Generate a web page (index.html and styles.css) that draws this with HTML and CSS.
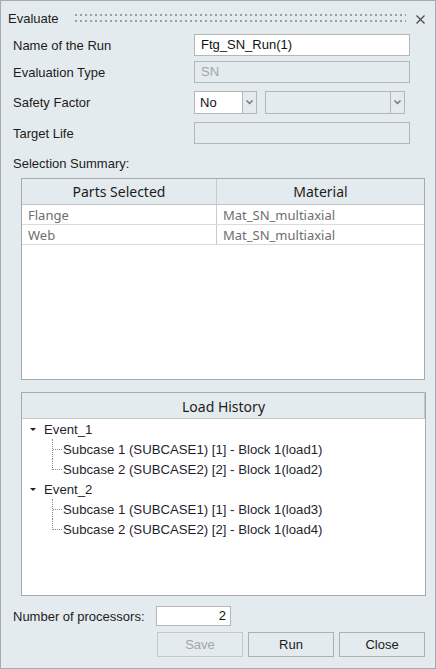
FILE: index.html
```html
<!DOCTYPE html>
<html>
<head>
<meta charset="utf-8">
<link rel="stylesheet" href="styles.css">
</head>
<body>
<div class="window">
  <div class="titlebar">
    <span class="title">Evaluate</span>
    <span class="grip"></span>
    <svg class="close" width="9" height="9" viewBox="0 0 9 9"><path d="M0.5 0.5 L8.5 8.5 M8.5 0.5 L0.5 8.5" stroke="#4a4a4a" stroke-width="1.2" fill="none"/></svg>
  </div>

  <div class="form">
    <div class="row r1">
      <span class="label">Name of the Run</span>
      <div class="input">Ftg_SN_Run(1)</div>
    </div>
    <div class="row r2">
      <span class="label">Evaluation Type</span>
      <div class="input disabled">SN</div>
    </div>
    <div class="row r3">
      <span class="label">Safety Factor</span>
      <div class="combos">
        <div class="select small"><span class="val">No</span><span class="arrow"><svg width="7" height="5" viewBox="0 0 7 5"><path d="M0.5 0.5 L3.5 3.5 L6.5 0.5" stroke="#777" stroke-width="1.5" fill="none"/></svg></span></div>
        <div class="select wide disabled"><span class="val"></span><span class="arrow"><svg width="7" height="5" viewBox="0 0 7 5"><path d="M0.5 0.5 L3.5 3.5 L6.5 0.5" stroke="#777" stroke-width="1.5" fill="none"/></svg></span></div>
      </div>
    </div>
    <div class="row r4">
      <span class="label">Target Life</span>
      <div class="input disabled"></div>
    </div>
    <div class="section-label">Selection Summary:</div>
  </div>

  <div class="table">
    <div class="thead">
      <div class="th">Parts Selected</div>
      <div class="th">Material</div>
    </div>
    <div class="tr"><div class="td">Flange</div><div class="td">Mat_SN_multiaxial</div></div>
    <div class="tr"><div class="td">Web</div><div class="td">Mat_SN_multiaxial</div></div>
  </div>

  <div class="tree">
    <div class="tree-head">Load History</div>
    <div class="tree-body">
      <div class="node"><span class="tri"></span><span>Event_1</span></div>
      <div class="leaf"><span class="line"></span><span>Subcase 1 (SUBCASE1) [1] - Block 1(load1)</span></div>
      <div class="leaf last"><span class="line"></span><span>Subcase 2 (SUBCASE2) [2] - Block 1(load2)</span></div>
      <div class="node"><span class="tri"></span><span>Event_2</span></div>
      <div class="leaf"><span class="line"></span><span>Subcase 1 (SUBCASE1) [1] - Block 1(load3)</span></div>
      <div class="leaf last"><span class="line"></span><span>Subcase 2 (SUBCASE2) [2] - Block 1(load4)</span></div>
    </div>
  </div>

  <div class="procs">
    <span class="label">Number of processors:</span>
    <div class="input num">2</div>
  </div>

  <div class="buttons">
    <div class="btn disabled">Save</div>
    <div class="btn">Run</div>
    <div class="btn">Close</div>
  </div>
</div>
</body>
</html>
```

FILE: styles.css
```css
* { box-sizing: border-box; }
html, body { margin: 0; padding: 0; }
body {
  font-family: "Liberation Sans", Arial, sans-serif;
  font-size: 13px;
  color: #1c1c1c;
  background: #e4ebee;
}
.window {
  width: 436px;
  height: 669px;
  border: 1px solid #a7abae;
  background: #e4ebee;
  display: flex;
  flex-direction: column;
}
.titlebar {
  height: 33px;
  display: flex;
  align-items: center;
  padding-left: 7px;
  padding-top: 2px;
}
.title { color: #1c1c1c; }
.grip {
  flex: 1;
  height: 10px;
  margin: 0 10px 0 16px;
  background-image: radial-gradient(circle at 1px 1px, #9a9ea2 1px, transparent 1.1px);
  background-size: 5px 6px;
}
.close { margin-right: 10px; margin-top: 1px; }

.form { padding-left: 12px; padding-right: 24px; }
.row {
  display: flex;
  align-items: center;
}
.label { width: 181px; flex: none; }
.input {
  width: 216px;
  height: 22px;
  background: #fff;
  border: 1px solid #b3b7ba;
  padding: 0 6px;
  line-height: 20px;
  color: #111;
}
.input.disabled { background: #e4ebee; color: #a2a6a9; }
.r2 { margin-top: 5px; }
.r3 { margin-top: 8px; }
.r4 { margin-top: 8px; }
.combos { display: flex; gap: 8px; }
.select {
  height: 23px;
  border: 1px solid #b3b7ba;
  display: flex;
}
.select .val {
  flex: 1;
  background: #fff;
  padding-left: 5px;
  line-height: 21px;
  color: #111;
}
.select.disabled .val { background: #e4ebee; }
.select .arrow {
  width: 14px;
  border-left: 1px solid #b3b7ba;
  display: flex;
  align-items: center;
  justify-content: center;
}
.select.small { width: 63px; }
.select.wide { width: 140px; }
.section-label { margin-top: 13px; height: 21px; line-height: 14px; }

.table {
  margin-left: 20px;
  width: 404px;
  height: 202px;
  border: 1px solid #a7abae;
  background: #fff;
  font-family: "Noto Sans", "Open Sans", sans-serif;
  font-size: 13px;
}
.thead {
  display: flex;
  height: 26px;
  background: #e4ebee;
  border-bottom: 1px solid #c2c6c9;
}
.th {
  line-height: 25px;
  text-align: center;
  color: #1c1c1c;
  font-size: 14px;
}
.th:first-child, .td:first-child { width: 195px; border-right: 1px solid #c8ccce; }
.th:last-child, .td:last-child { flex: 1; }
.tr { display: flex; height: 20px; border-bottom: 1px solid #d9dcdd; }
.td {
  padding-left: 6px;
  line-height: 20px;
  color: #6e6e6e;
}

.tree {
  margin-top: 12px;
  margin-left: 20px;
  width: 405px;
  height: 204px;
  border: 1px solid #a7abae;
  background: #fff;
  display: flex;
  flex-direction: column;
}
.tree-head {
  height: 26px;
  background: #e4ebee;
  border: 1px solid #c2c6c9;
  border-top-color: #e4ebee;
  border-left-color: #e4ebee;
  text-align: center;
  line-height: 25px;
  font-family: "Noto Sans", "Open Sans", sans-serif;
  font-size: 14px;
  color: #1c1c1c;
}
.tree-body { color: #1f1f2e; font-size: 13.2px; }
.node, .leaf {
  height: 20px;
  display: flex;
  align-items: center;
}
.tri {
  width: 0; height: 0;
  border-left: 3px solid transparent;
  border-right: 3px solid transparent;
  border-top: 3px solid #222;
  margin-left: 8px;
  margin-right: 8px;
}
.leaf { position: relative; padding-left: 41px; }
.leaf .line {
  position: absolute;
  left: 30px;
  top: 0;
  width: 10px;
  height: 11px;
  border-left: 1px dotted #8a8a8a;
  border-bottom: 1px dotted #8a8a8a;
}
.leaf:not(.last) .line { height: 20px; border-bottom: none; }
.leaf:not(.last)::after {
  content: "";
  position: absolute;
  left: 31px;
  top: 10px;
  width: 9px;
  border-bottom: 1px dotted #8a8a8a;
}

.procs {
  display: flex;
  align-items: center;
  margin-top: 10px;
  padding-left: 12px;
}
.procs .label { width: 143px; }
.input.num { width: 75px; height: 20px; text-align: right; padding-right: 4px; line-height: 18px; }
.buttons {
  display: flex;
  justify-content: flex-end;
  gap: 5px;
  margin-top: 6px;
  padding-right: 10px;
}
.btn {
  width: 86px;
  height: 25px;
  border: 1px solid #adb1b4;
  text-align: center;
  line-height: 23px;
  color: #1c1c1c;
}
.btn.disabled { color: #a2a6a9; border-color: #c5c9cc; }
```
